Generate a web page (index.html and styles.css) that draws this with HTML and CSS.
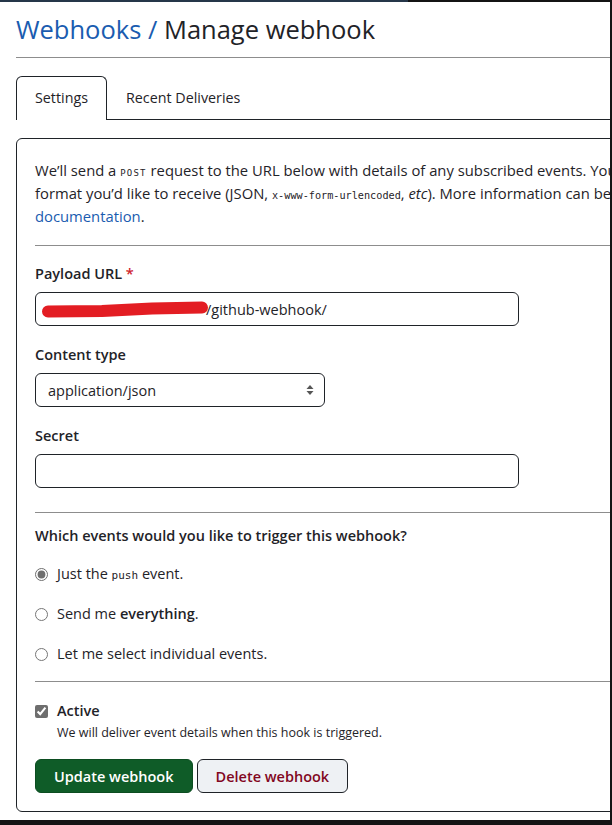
FILE: index.html
```html
<!DOCTYPE html>
<html lang="en">
<head>
<meta charset="utf-8">
<title>Manage webhook</title>
<link rel="stylesheet" href="styles.css">
</head>
<body>
<div class="frame">
  <div class="page">
    <header class="subhead">
      <h1 class="subhead-title"><a class="crumb" href="#">Webhooks</a><span class="crumb-sep"> / </span>Manage webhook</h1>
    </header>

    <nav class="tabnav">
      <a class="tab selected" href="#">Settings</a>
      <a class="tab" href="#">Recent Deliveries</a>
    </nav>

    <form class="card">
      <p class="intro">
        <span class="line">We’ll send a <code class="caps">POST</code> request to the URL below with details of any subscribed events. You can also specify which data</span>
        <span class="line">format you’d like to receive (JSON, <code class="mono">x-www-form-urlencoded</code>, <em>etc</em>). More information can be found in our <a href="#">developer</a></span>
        <span class="line"><a href="#">documentation</a>.</span>
      </p>

      <hr class="rule">

      <div class="field">
        <label class="label">Payload URL <span class="req">*</span></label>
        <div class="input wide">
          <span class="redact">
            <svg width="168" height="18" viewBox="0 0 168 18" aria-hidden="true">
              <path d="M6 11.5 L60 11 L110 8.5 L160 7.5" fill="none" stroke="#e31d23" stroke-width="12" stroke-linecap="round" stroke-linejoin="round"/>
            </svg>
          </span>
          <span class="value">/github-webhook/</span>
        </div>
      </div>

      <div class="field">
        <label class="label">Content type</label>
        <div class="input select">
          <span class="value">application/json</span>
          <svg class="caret" width="8" height="12" viewBox="0 0 8 12" aria-hidden="true">
            <path d="M4 1 L7.5 5 H0.5 Z M4 11 L7.5 7 H0.5 Z" fill="#555"/>
          </svg>
        </div>
      </div>

      <div class="field">
        <label class="label">Secret</label>
        <div class="input wide"></div>
      </div>

      <hr class="rule rule-b">

      <div class="events">
        <p class="label">Which events would you like to trigger this webhook?</p>
        <label class="choice"><input type="radio" name="ev" checked><span>Just the <code class="mono small">push</code> event.</span></label>
        <label class="choice"><input type="radio" name="ev"><span>Send me <strong>everything</strong>.</span></label>
        <label class="choice"><input type="radio" name="ev"><span>Let me select individual events.</span></label>
      </div>

      <hr class="rule rule-c">

      <div class="active">
        <label class="check"><input type="checkbox" checked><span class="label">Active</span></label>
        <p class="note">We will deliver event details when this hook is triggered.</p>
      </div>

      <div class="actions">
        <button type="button" class="btn btn-primary">Update webhook</button>
        <button type="button" class="btn btn-danger">Delete webhook</button>
      </div>
    </form>
  </div>
</div>
</body>
</html>
```

FILE: styles.css
```css
html, body {
  margin: 0;
  padding: 0;
  background: #fff;
}

.frame {
  width: 612px;
  height: 825px;
  box-sizing: border-box;
  overflow: hidden;
  padding-top: 2px;
  border-right: 2px solid #141414;
  border-bottom: 5px solid #141414;
  background: linear-gradient(to right, #253649 0, #253649 408px, #141414 408px) top left / 100% 2px no-repeat, #fff;
  font-family: "Open Sans", "Noto Sans", sans-serif;
  color: #1f2328;
}

.page {
  width: 1000px;
  margin-left: 16px;
}

.subhead {
  padding: 9px 0 10px;
  border-bottom: 1px solid #8d8d8d;
}

.subhead-title {
  margin: 0;
  font-size: 25.5px;
  font-weight: 400;
  line-height: 36px;
}

.crumb {
  color: #1a5cb0;
  text-decoration: none;
}

.crumb-sep {
  color: #1a5cb0;
}

.tabnav {
  display: flex;
  margin-top: 18px;
  border-bottom: 1px solid #1f2328;
  font-size: 14.3px;
}

.tab {
  display: block;
  padding: 0 18px;
  line-height: 42px;
  color: #1f2328;
  text-decoration: none;
  border: 1px solid transparent;
  border-bottom: 0;
  border-radius: 6px 6px 0 0;
}

.tab.selected {
  border-color: #1f2328;
  background: #fff;
  margin-bottom: -1px;
  padding-bottom: 1px;
}

.card {
  margin-top: 18px;
  border: 1px solid #1f2328;
  border-radius: 6px;
  padding: 20px 18px 18px;
  font-size: 14.5px;
}

.intro {
  margin: 0;
  font-size: 14.8px;
  line-height: 23px;
}

.intro .line {
  display: block;
  height: 23px;
  white-space: nowrap;
}

.intro a {
  color: #1a5cb0;
  text-decoration: none;
}

.intro code {
  line-height: 1;
}

.caps {
  font-family: "DejaVu Sans Mono", "Liberation Mono", monospace;
  font-size: 9px;
  letter-spacing: 1.2px;
}

.mono {
  font-family: "DejaVu Sans Mono", "Liberation Mono", monospace;
  font-size: 10.2px;
}

.mono.small {
  font-size: 11px;
  line-height: 1;
}

.rule {
  margin: 17px 0 0;
  border: 0;
  border-top: 1px solid #8d8d8d;
}

.field {
  margin-top: 18px;
}

.field + .field {
  margin-top: 19px;
}

.label {
  display: block;
  margin: 0;
  font-weight: 600;
  line-height: 20px;
}

.req {
  color: #cf222e;
}

.input {
  display: flex;
  align-items: center;
  box-sizing: border-box;
  height: 34px;
  margin-top: 8px;
  border: 1px solid #1f2328;
  border-radius: 6px;
  padding: 0 12px;
}

.input.wide {
  width: 484px;
}

.input.wide .redact {
  display: block;
  margin-left: -6px;
  height: 18px;
}

.input.wide .value {
  margin-left: -4px;
}

.input.select {
  width: 290px;
  justify-content: space-between;
  padding: 0 10px 0 12px;
}

.caret {
  display: block;
}

.rule-b {
  margin-top: 24px;
}

.events {
  margin-top: 13px;
}

.choice {
  display: flex;
  align-items: center;
  height: 20px;
  line-height: 20px;
  margin-top: 20px;
}

.choice:first-of-type {
  margin-top: 18px;
}

.choice input,
.check input {
  flex: none;
  width: 13px;
  height: 13px;
  margin: 0 9px 0 0;
  accent-color: #6e6e6e;
}

.choice strong {
  font-weight: 600;
}

.rule-c {
  margin-top: 17px;
}

.active {
  margin-top: 19px;
}

.check {
  display: flex;
  align-items: center;
  height: 20px;
}

.note {
  margin: 3px 0 0 22px;
  font-size: 12.5px;
  line-height: 18px;
}

.actions {
  display: flex;
  gap: 4px;
  margin-top: 17px;
}

.btn {
  box-sizing: border-box;
  height: 34px;
  padding: 0 18px;
  border-radius: 6px;
  font-family: inherit;
  font-size: 14.5px;
  font-weight: 600;
  cursor: pointer;
}

.btn-primary {
  background: #0f5c28;
  border: 1px solid #0c4d21;
  color: #fff;
}

.btn-danger {
  background: #eef1f4;
  border: 1px solid #1f2328;
  color: #82071e;
}
```
